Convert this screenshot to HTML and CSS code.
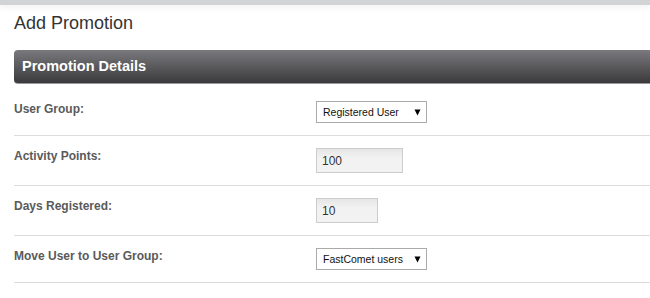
FILE: index.html
```html
<!DOCTYPE html>
<html lang="en">
<head>
    <meta charset="UTF-8">
    <meta name="viewport" content="width=device-width, initial-scale=1.0">
    <title>Add Promotion</title>
    <link rel="stylesheet" href="styles.css">
</head>
<body>
    <div class="top-bar"></div>
    <div class="page">
        <h1>Add Promotion</h1>
        <div class="section-head">Promotion Details</div>
        <form id="promotion-form" action="/promotions/add" method="post">
            <div class="form-row">
                <label for="user_group">User Group:</label>
                <select id="user_group" name="user_group" class="select">
                    <option>Registered User</option>
                    <option>FastComet users</option>
                </select>
            </div>
            <div class="form-row">
                <label for="activity_points">Activity Points:</label>
                <input type="text" id="activity_points" name="activity_points" class="text-input wide" value="100">
            </div>
            <div class="form-row">
                <label for="days_registered">Days Registered:</label>
                <input type="text" id="days_registered" name="days_registered" class="text-input narrow" value="10">
            </div>
            <div class="form-row">
                <label for="move_group">Move User to User Group:</label>
                <select id="move_group" name="move_group" class="select">
                    <option>FastComet users</option>
                    <option>Registered User</option>
                </select>
            </div>
        </form>
    </div>
</body>
</html>
```

FILE: styles.css
```css
body {
    font-family: "Liberation Sans", Arial, sans-serif;
    margin: 0;
    background-color: #fff;
    overflow: hidden;
}
.top-bar {
    height: 5px;
    background-color: #d2d3d5;
    box-shadow: 0 2px 6px rgba(0, 0, 0, 0.07);
}
.page {
    padding-left: 14px;
}
h1 {
    margin: 8px 0 16px;
    font-size: 18px;
    line-height: 21px;
    font-weight: normal;
    color: #333;
}
.section-head {
    height: 33px;
    line-height: 33px;
    padding-left: 8px;
    margin-bottom: 5px;
    font-size: 14.5px;
    font-weight: bold;
    color: #fff;
    background: linear-gradient(#7a7a7e, #3a3a3c);
    border-bottom: 1px solid #999;
    border-radius: 4px 0 0 4px;
}
.form-row {
    display: flex;
    align-items: flex-start;
    padding: 12px 0;
    border-bottom: 1px solid #dcdcdc;
}
.form-row label {
    width: 302px;
    padding-top: 1px;
    font-size: 12px;
    line-height: 14px;
    font-weight: bold;
    color: #5a5a5a;
}
.select {
    appearance: none;
    -webkit-appearance: none;
    width: 111px;
    height: 22px;
    margin: 0;
    padding: 0 0 0 6px;
    font-family: "Liberation Sans", Arial, sans-serif;
    font-size: 10.5px;
    color: #111;
    border: 1px solid #aaa;
    border-radius: 0;
    background: #fff url("data:image/svg+xml,%3Csvg xmlns='http://www.w3.org/2000/svg' width='7' height='7'%3E%3Cpath d='M0.5 0.5H6.5L3.5 6.5Z' fill='%23000'/%3E%3C/svg%3E") no-repeat right 5px center;
}
.text-input {
    box-sizing: border-box;
    height: 25px;
    margin: 0;
    padding: 0 0 0 5px;
    font-family: "Liberation Sans", Arial, sans-serif;
    font-size: 12px;
    color: #333;
    border: 1px solid #ccc;
    background: linear-gradient(#e6e6e6, #f2f2f2 40%);
}
.text-input.wide {
    width: 87px;
}
.text-input.narrow {
    width: 62px;
}
```
